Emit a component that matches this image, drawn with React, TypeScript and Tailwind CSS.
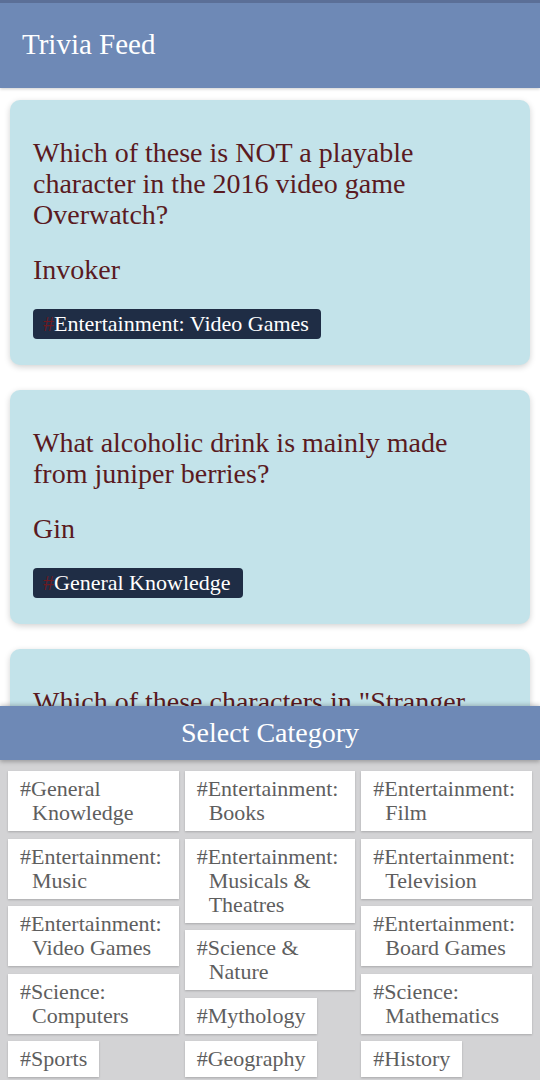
import React from "react";

const serif = { fontFamily: '"Liberation Serif", "DejaVu Serif", serif' };

function Card({ q, a, tag }: { q: string; a: string; tag: string }) {
  return (
    <div className="mx-[10px] rounded-[10px] bg-[#c3e3ea] px-[23px] pt-[37px] pb-[26px] shadow-[0_2px_6px_rgba(0,0,0,0.18)]">
      <p className="text-[28px] leading-[31px] text-[#5a1a21]">{q}</p>
      <p className="mt-[24px] text-[28px] leading-[31px] text-[#5a1a21]">{a}</p>
      <div className="mt-[24px]">
        <span className="inline-block rounded-[4px] bg-[#1f2d45] pl-[10px] pr-[12px] text-[22px] leading-[30px] text-white">
          <span className="text-[#6b1a22]">#</span>
          {tag}
        </span>
      </div>
    </div>
  );
}

function Chip({ text }: { text: string }) {
  return (
    <div>
      <div className="inline-block max-w-full bg-white pl-[24px] pr-[12px] py-[6px] text-[22px] leading-[24px] text-[#5e5e5e] indent-[-12px] shadow-[0_1px_2px_rgba(0,0,0,0.2)]">
        {text}
      </div>
    </div>
  );
}

export default function App() {
  const col1 = ["#General Knowledge", "#Entertainment: Music", "#Entertainment: Video Games", "#Science: Computers", "#Sports"];
  const col2 = ["#Entertainment: Books", "#Entertainment: Musicals & Theatres", "#Science & Nature", "#Mythology", "#Geography"];
  const col3 = ["#Entertainment: Film", "#Entertainment: Television", "#Entertainment: Board Games", "#Science: Mathematics", "#History"];
  return (
    <div className="flex h-[1080px] w-[540px] flex-col overflow-hidden bg-white" style={serif}>
      <div className="h-[88px] shrink-0 border-t-[3px] border-[#5b6f97] bg-[#6e89b6] pl-[22px] pt-[25px] text-[29px] leading-[32px] text-white shadow-[0_1px_3px_rgba(0,0,0,0.2)]">
        Trivia Feed
      </div>
      <div className="flex min-h-0 flex-1 flex-col gap-[25px] overflow-hidden pt-[12px]">
        <Card
          q="Which of these is NOT a playable character in the 2016 video game Overwatch?"
          a="Invoker"
          tag="Entertainment: Video Games"
        />
        <Card q="What alcoholic drink is mainly made from juniper berries?" a="Gin" tag="General Knowledge" />
        <Card q={'Which of these characters in "Stranger Things" has the power of telekinesis?'} a="Eleven" tag="Entertainment: Television" />
      </div>
      <div className="h-[374px] shrink-0 bg-[#d3d3d5] shadow-[0_-2px_4px_rgba(0,0,0,0.15)]">
        <div className="h-[54px] bg-[#6e89b6] text-center text-[28px] leading-[54px] text-white shadow-[0_2px_4px_rgba(0,0,0,0.25)]">
          Select Category
        </div>
        <div className="flex gap-[6px] px-[8px] pt-[11px]">
          {[col1, col2, col3].map((col, i) => (
            <div key={i} className="flex flex-1 flex-col gap-[7.5px]">
              {col.map((t) => (
                <Chip key={t} text={t} />
              ))}
            </div>
          ))}
        </div>
      </div>
    </div>
  );
}
